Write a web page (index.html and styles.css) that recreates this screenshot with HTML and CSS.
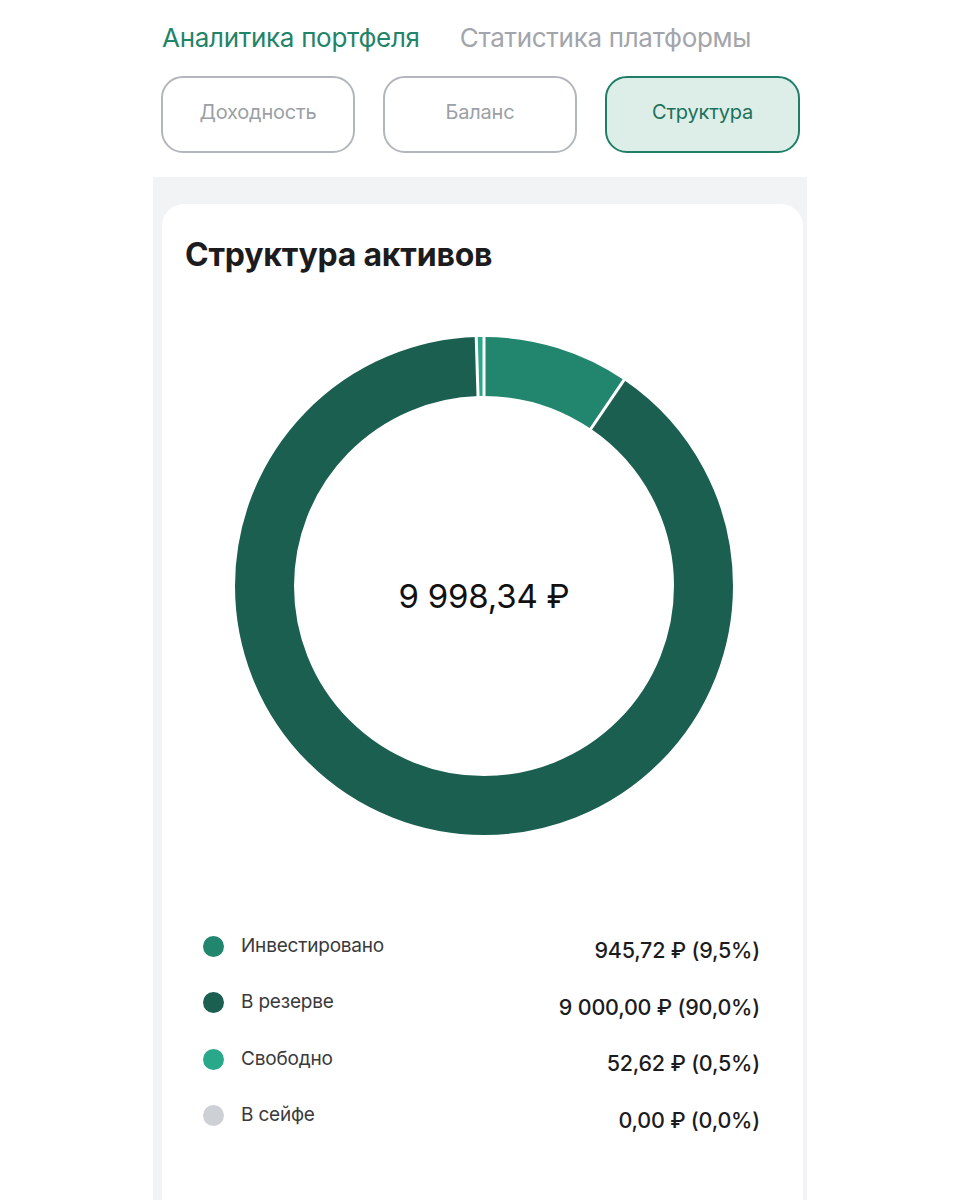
FILE: index.html
```html
<!DOCTYPE html>
<html lang="ru">
<head>
<meta charset="utf-8">
<title>Структура активов</title>
<link rel="stylesheet" href="styles.css">
</head>
<body>
<div class="page">
  <div class="tabs">
    <span class="tab tab-active">Аналитика портфеля</span>
    <span class="tab">Статистика платформы</span>
  </div>
  <div class="segments">
    <div class="seg">Доходность</div>
    <div class="seg">Баланс</div>
    <div class="seg seg-active">Структура</div>
  </div>
  <div class="panel">
    <div class="card">
      <h1 class="title">Структура активов</h1>
      <div class="donut">
        <svg width="500" height="500" viewBox="0 0 500 500">
          <g transform="rotate(-90 250 250)" fill="none" stroke-width="59">
            <circle cx="250" cy="250" r="219.5" stroke="#22866e" stroke-dasharray="131.02 1400" stroke-dashoffset="0"/>
            <circle cx="250" cy="250" r="219.5" stroke="#1b5f51" stroke-dasharray="1241.24 1400" stroke-dashoffset="-131.02"/>
            <circle cx="250" cy="250" r="219.5" stroke="#2aa88a" stroke-dasharray="6.9 1400" stroke-dashoffset="-1372.26"/>
          </g>
          <g stroke="#ffffff" stroke-width="3">
            <line x1="250" y1="63" x2="250" y2="-3"/>
            <line x1="355.7" y1="94.5" x2="391.1" y2="42.4"/>
            <line x1="244.1" y1="63" x2="242.1" y2="-3"/>
          </g>
        </svg>
        <div class="total">9 998,34 ₽</div>
      </div>
      <ul class="legend">
        <li class="row"><span class="dot dot-inv"></span><span class="label">Инвестировано</span><span class="value">945,72 ₽ (9,5%)</span></li>
        <li class="row"><span class="dot dot-res"></span><span class="label">В резерве</span><span class="value">9 000,00 ₽ (90,0%)</span></li>
        <li class="row"><span class="dot dot-free"></span><span class="label">Свободно</span><span class="value">52,62 ₽ (0,5%)</span></li>
        <li class="row"><span class="dot dot-safe"></span><span class="label">В сейфе</span><span class="value">0,00 ₽ (0,0%)</span></li>
      </ul>
    </div>
  </div>
</div>
</body>
</html>
```

FILE: styles.css
```css
* { box-sizing: border-box; }
html, body { margin: 0; padding: 0; background: #ffffff; }
body {
  font-family: Inter, Roboto, "Noto Sans", sans-serif;
  color: #1c1c1e;
  overflow: hidden;
  height: 1200px;
}
.page {
  width: 654px;
  margin-left: 153px;
}
.tabs {
  display: flex;
  gap: 40px;
  padding: 22px 0 0 9px;
  height: 54px;
}
.tab {
  font-size: 26px;
  line-height: 32px;
  color: #a2a5ab;
  letter-spacing: -0.3px;
}
.tab-active { color: #1f8468; }
.segments {
  display: flex;
  gap: 28px;
  margin-top: 22px;
  padding-left: 8px;
}
.seg {
  width: 194px;
  height: 77px;
  border: 2px solid #b3b6bb;
  border-radius: 22px;
  display: flex;
  align-items: center;
  justify-content: center;
  padding-bottom: 5px;
  font-size: 20px;
  color: #9c9fa5;
  letter-spacing: -0.2px;
}
.seg-active {
  width: 195px;
  background: #ddede8;
  border-color: #1f7f66;
  color: #1c7159;
}
.panel {
  margin-top: 24px;
  background: #f2f3f5;
  padding: 27px 4px 0 9px;
  height: 1023px;
  overflow: hidden;
}
.card {
  background: #ffffff;
  border-radius: 22px;
  padding: 31px 43px 0 23px;
  height: 1100px;
}
.title {
  margin: 0;
  font-size: 32px;
  line-height: 40px;
  font-weight: 700;
  color: #1c1c1e;
  letter-spacing: -0.2px;
}
.donut {
  position: relative;
  width: 500px;
  height: 500px;
  margin: 61px 0 0 49px;
}
.donut svg { display: block; }
.total {
  position: absolute;
  left: 0;
  right: 0;
  top: 0;
  bottom: 0;
  display: flex;
  align-items: center;
  justify-content: center;
  padding-top: 20px;
  font-size: 33px;
  color: #111111;
  letter-spacing: -0.2px;
}
.legend {
  list-style: none;
  margin: 82px 0 0 18px;
  padding: 0;
}
.row {
  display: flex;
  align-items: center;
  height: 56.5px;
}
.dot {
  width: 21px;
  height: 21px;
  border-radius: 50%;
  flex: none;
}
.dot-inv { background: #22866e; }
.dot-res { background: #1b5f51; }
.dot-free { background: #2aa88a; }
.dot-safe { background: #cdd1d6; }
.label {
  margin-left: 17px;
  font-size: 19px;
  color: #3a3a3c;
  letter-spacing: -0.2px;
  position: relative;
  top: -1px;
}
.value {
  margin-left: auto;
  font-size: 21.5px;
  font-weight: 500;
  color: #1c1c1e;
  letter-spacing: -0.2px;
  position: relative;
  top: 4px;
}
```
